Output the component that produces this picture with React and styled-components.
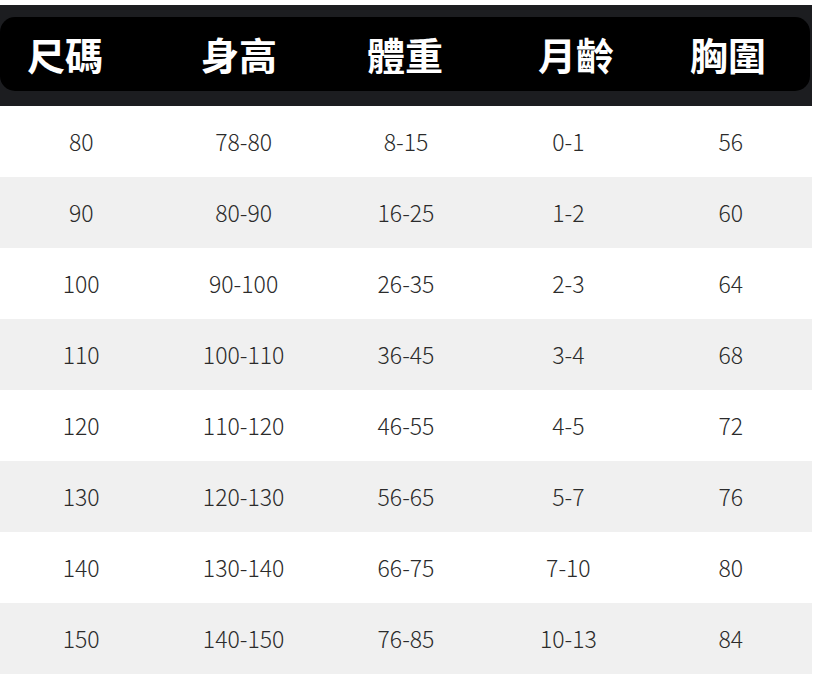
import React from 'react';
import styled, { createGlobalStyle } from 'styled-components';

const GlobalStyle = createGlobalStyle`
  html, body {
    margin: 0;
    padding: 0;
    background: #ffffff;
  }
  body {
    font-family: "Noto Sans CJK TC", "Noto Sans", sans-serif;
  }
`;

const Page = styled.div`
  width: 812px;
  padding-top: 5px;
`;

const HeaderBand = styled.div`
  background: #1c1d20;
  padding: 12px 2px 15px 0;
`;

const HeaderBar = styled.div`
  height: 74px;
  background: #000000;
  border-radius: 15px;
  display: grid;
  grid-template-columns: 130px 218px 114px 228px 74px;
  align-items: center;
`;

const HeadCell = styled.div`
  color: #ffffff;
  font-size: 38px;
  font-weight: 700;
  text-align: center;
  line-height: 1;
  white-space: nowrap;
`;

const Row = styled.div`
  height: 71px;
  display: grid;
  grid-template-columns: repeat(5, 1fr);
  align-items: center;
  background: ${p => (p.$shaded ? '#f0f0f0' : '#ffffff')};
`;

const Cell = styled.div`
  text-align: center;
  font-size: 23px;
  font-weight: 300;
  color: #2b2b2b;
  padding-bottom: 2px;
`;

const headers = ['尺碼', '身高', '體重', '月齡', '胸圍'];

const rows = [
  ['80', '78-80', '8-15', '0-1', '56'],
  ['90', '80-90', '16-25', '1-2', '60'],
  ['100', '90-100', '26-35', '2-3', '64'],
  ['110', '100-110', '36-45', '3-4', '68'],
  ['120', '110-120', '46-55', '4-5', '72'],
  ['130', '120-130', '56-65', '5-7', '76'],
  ['140', '130-140', '66-75', '7-10', '80'],
  ['150', '140-150', '76-85', '10-13', '84'],
];

export default function App() {
  return (
    <>
      <GlobalStyle />
      <Page>
        <HeaderBand>
          <HeaderBar>
            {headers.map(h => (
              <HeadCell key={h}>{h}</HeadCell>
            ))}
          </HeaderBar>
        </HeaderBand>
        {rows.map((r, i) => (
          <Row key={r[0]} $shaded={i % 2 === 1}>
            {r.map((v, j) => (
              <Cell key={j}>{v}</Cell>
            ))}
          </Row>
        ))}
      </Page>
    </>
  );
}
